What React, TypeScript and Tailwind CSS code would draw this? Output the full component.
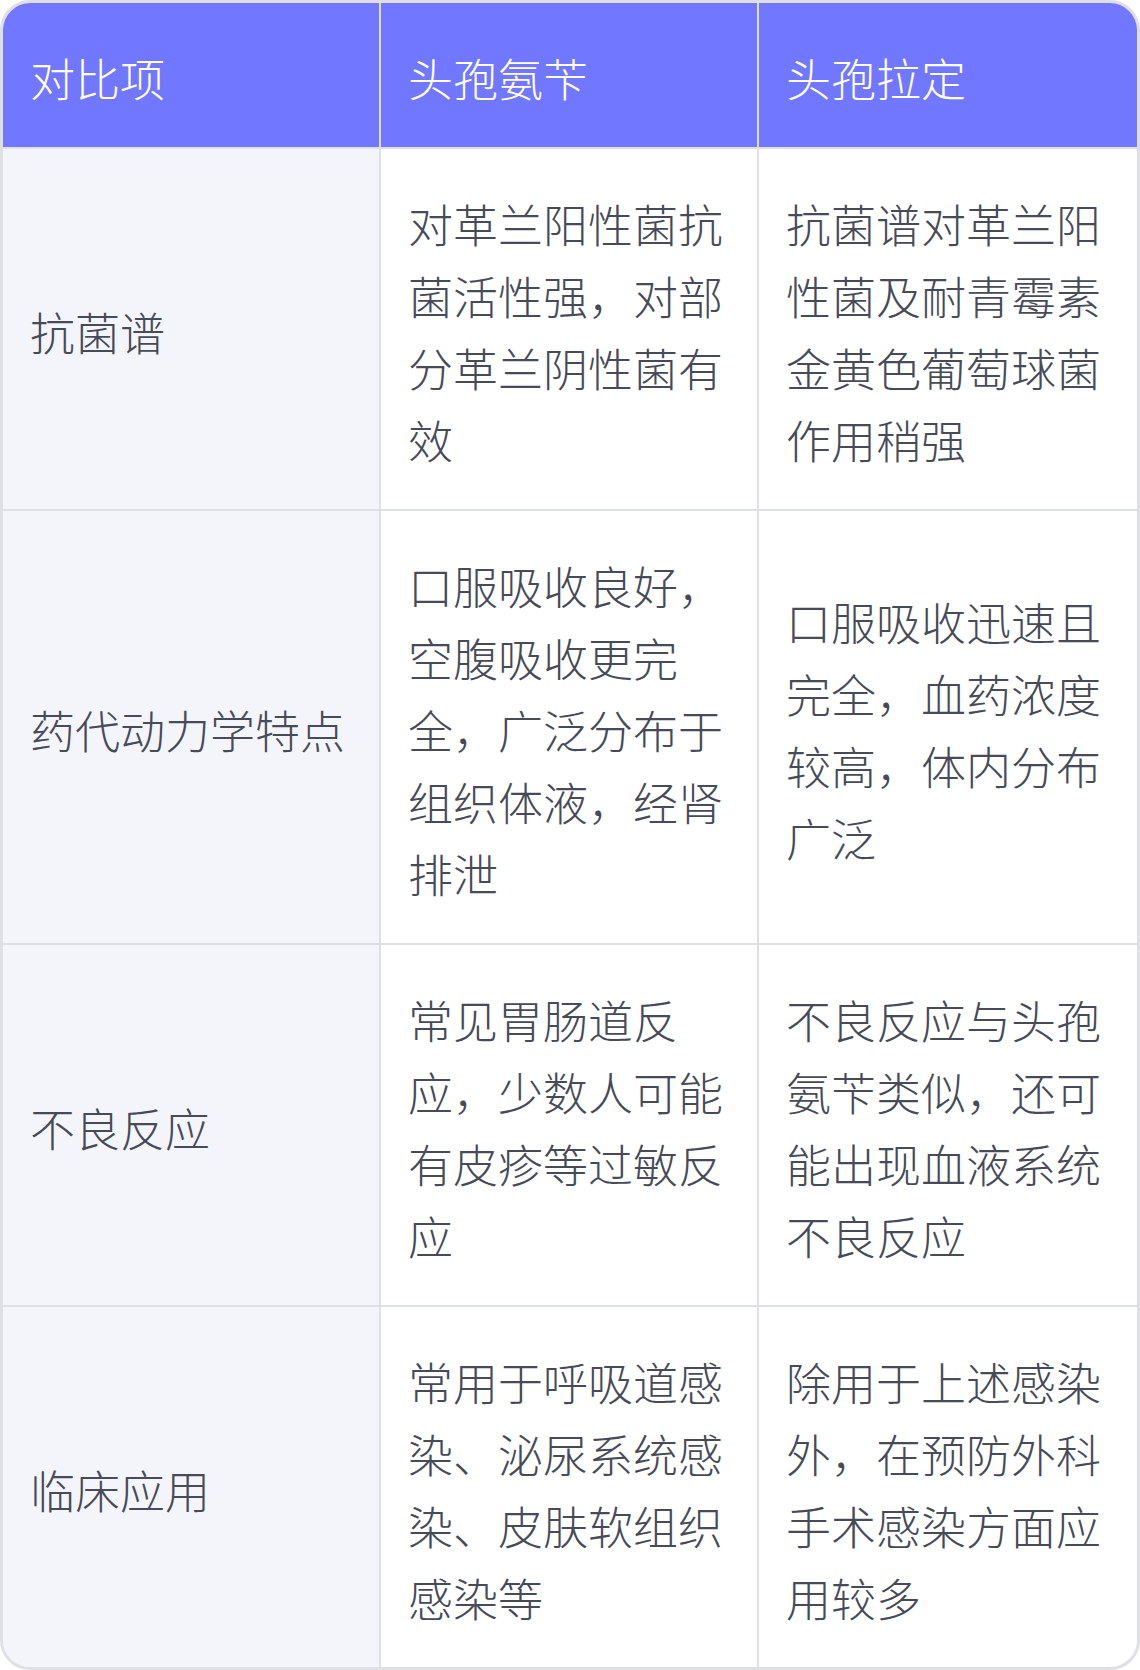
import React from 'react';

// --- DATA ---
const headers = ['对比项', '头孢氨苄', '头孢拉定'];

const rows = [
    {
        item: '抗菌谱',
        a: '对革兰阳性菌抗菌活性强，对部分革兰阴性菌有效',
        b: '抗菌谱对革兰阳性菌及耐青霉素金黄色葡萄球菌作用稍强',
    },
    {
        item: '药代动力学特点',
        a: '口服吸收良好，空腹吸收更完全，广泛分布于组织体液，经肾排泄',
        b: '口服吸收迅速且完全，血药浓度较高，体内分布广泛',
    },
    {
        item: '不良反应',
        a: '常见胃肠道反应，少数人可能有皮疹等过敏反应',
        b: '不良反应与头孢氨苄类似，还可能出现血液系统不良反应',
    },
    {
        item: '临床应用',
        a: '常用于呼吸道感染、泌尿系统感染、皮肤软组织感染等',
        b: '除用于上述感染外，在预防外科手术感染方面应用较多',
    },
];

export default function App() {
    return (
        <div className="w-[1140px] h-[1670px] bg-white font-['Noto_Sans_CJK_SC',sans-serif] font-light text-[45px] leading-[72px]">
            <div className="overflow-hidden rounded-[30px] border-[3px] border-[#dfe0e5]">
                {/* --- HEADER --- */}
                <div className="grid grid-cols-3 bg-[#7177fe] text-white">
                    {headers.map((h, i) => (
                        <div key={h} className={`px-[27px] pt-[39px] pb-[33px] ${i < 2 ? 'border-r-2 border-[#dfe0e5]' : ''}`}>
                            {h}
                        </div>
                    ))}
                </div>

                {/* --- BODY --- */}
                {rows.map(row => (
                    <div key={row.item} className="grid grid-cols-3 border-t-2 border-[#dfe0e5] text-[#474a57]">
                        <div className="flex items-center bg-[#f4f5fa] px-[27px] pt-[39px] pb-[33px] border-r-2 border-[#dfe0e5]">
                            {row.item}
                        </div>
                        <div className="flex items-center px-[27px] pt-[39px] pb-[33px] border-r-2 border-[#dfe0e5]">
                            <span className="break-all">{row.a}</span>
                        </div>
                        <div className="flex items-center px-[27px] pt-[39px] pb-[33px]">
                            <span className="break-all">{row.b}</span>
                        </div>
                    </div>
                ))}
            </div>
        </div>
    );
}
